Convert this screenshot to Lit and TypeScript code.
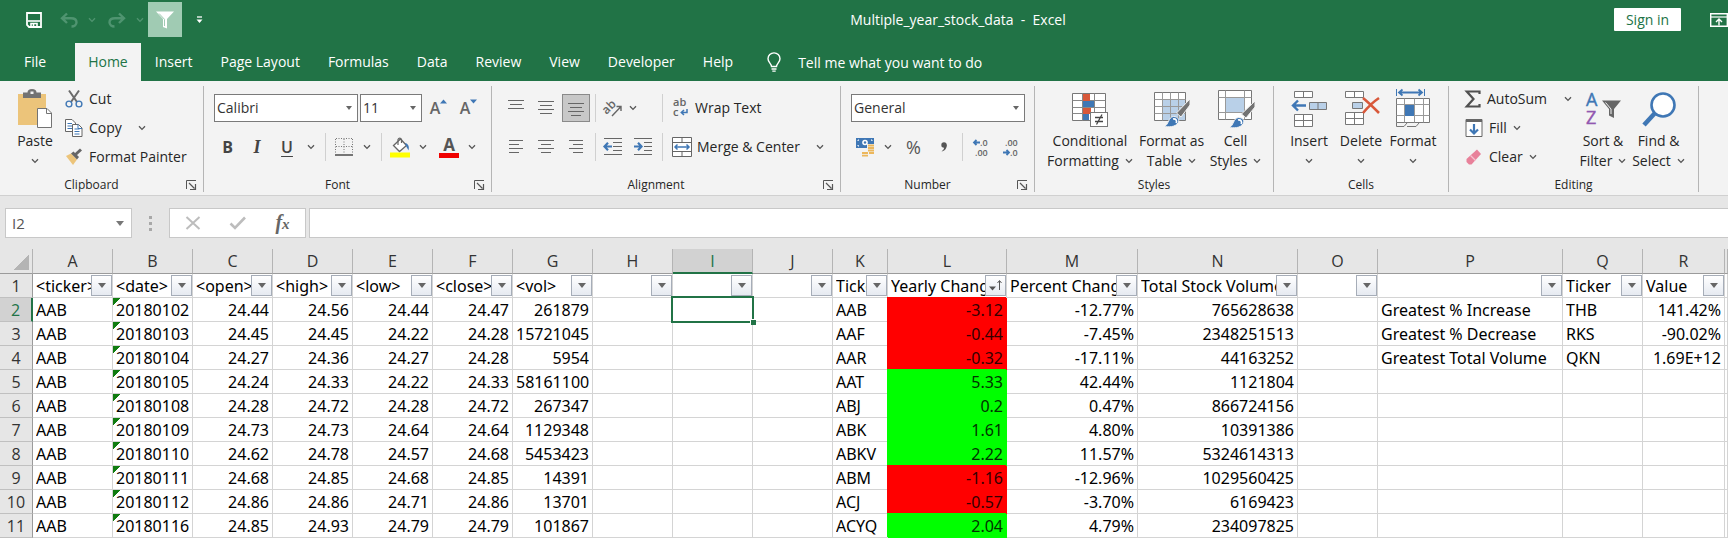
import { LitElement, html, css, svg, nothing } from 'lit';
import { customElement } from 'lit/decorators.js';
import { classMap } from 'lit/directives/class-map.js';

const chev = html`<svg class="chev" width="8" height="6" viewBox="0 0 8 6" aria-hidden="true"><path d="M1 1.2 4 4.4 7 1.2" fill="none" stroke="currentColor" stroke-width="1.3" /></svg>`;

const icon = (w: number, h: number, body: unknown) =>
  html`<svg class="icon" width=${w} height=${h} viewBox="0 0 ${w} ${h}" fill="none" aria-hidden="true">${body}</svg>`;

const lines = (rows: [number, number][], top = 1) =>
  rows.map(([a, b], i) => svg`<path d="M${a} ${top + i * 4 + 0.5}H${b}" stroke="#666" />`);

const ic = {
  save: icon(16, 16, svg`<path d="M1 1H15V15H3L1 13Z" stroke="#fff" stroke-width="1.8"/><path d="M2 9H14" stroke="#fff" stroke-width="1.6"/><path d="M5 15V11.500H11V15" stroke="#fff" stroke-width="1.6"/><path d="M7.500 12V15" stroke="#fff" stroke-width="1.6"/>`),
  undo: icon(18, 16, svg`<path d="M7 1.5 2 6.2 7 11M2.5 6.2H11C14.500 6.200 16.500 8 16.500 10.300S14.500 14.500 11.500 14.500" stroke="#4f9470" stroke-width="2.4"/>`),
  redo: icon(18, 16, svg`<path d="M11 1.500 16 6.200 11 11M15.500 6.200H7C3.500 6.200 1.500 8 1.500 10.300S3.500 14.500 6.500 14.500" stroke="#4f9470" stroke-width="2.400"/>`),
  funnel: icon(20, 18, svg`<path d="M1 .5H19L12 8V17.500L8 16V8Z" fill="#fff"/><path d="M4 2.500 9.500 8.300V15" stroke="#a0cbb3" stroke-width="1"/>`),
  more: icon(7, 8, svg`<path d="M1 1H6" stroke="#fff" stroke-width="1.300"/><path d="M.5 3.500H6.500L3.500 7Z" fill="#fff"/>`),
  display: icon(18, 14, svg`<path d="M.7.700H17.300V13.300H.7Z" stroke="#fff" stroke-width="1.400"/><path d="M1 4H17" stroke="#fff" stroke-width="1.200"/><path d="M9 12.500V6.500M6 9 9 6 12 9" stroke="#fff" stroke-width="1.400"/>`),
  bulb: icon(16, 20, svg`<path d="M5.500 14.500C5.500 11.500 2 10.500 2 6.700A6 5.800 0 0 1 14 6.700C14 10.500 10.500 11.500 10.500 14.500Z" stroke="#fff" stroke-width="1.400"/><path d="M5.500 17H10.500M6.300 19.200H9.700" stroke="#fff" stroke-width="1.300"/>`),
  paste: icon(36, 40, svg`<rect x="1" y="5" width="28" height="31" fill="#ecc47a"/><path d="M6 3.500H10.500A4.500 3.500 0 0 1 19.500 3.500H24V9H6Z" fill="#737373"/><rect x="13.500" y="2.500" width="3" height="2.500" fill="#f3f3f3"/><path d="M20.500 19.500H30L34.500 24V38.500H20.500Z" fill="#fff" stroke="#737373"/><path d="M29.500 19.500V24.500H34.500" stroke="#737373"/>`),
  cut: icon(18, 18, svg`<path d="M4 .5 12 12M14 .5 6 12" stroke="#6a6a6a" stroke-width="2"/><circle cx="4" cy="14" r="2.900" stroke="#3f77b5" stroke-width="1.400"/><circle cx="14" cy="14" r="2.900" stroke="#3f77b5" stroke-width="1.400"/>`),
  copy: icon(18, 18, svg`<path d="M.5.500H7L10.500 4V12.500H.5Z" fill="#fff" stroke="#666"/><path d="M2.500 4.500H7M2.500 7H7M2.500 9.500H7" stroke="#3f77b5"/><path d="M7.500 5.500H13.500L17 9V17.500H7.500Z" fill="#fff" stroke="#666"/><path d="M9.500 10H14.500M9.500 12.500H14.500M9.500 15H14.500M13 5.500V9.500H17" stroke="#3f77b5"/>`),
  painter: icon(18, 18, svg`<path d="M1 8 6 5.500 12 11.500 8 17Z" fill="#ecc47a"/><path d="M6 5.500 8.500 3.500 14 9 12 11.500Z" fill="#666"/><path d="M10.500 6.500 16 1.500" stroke="#666" stroke-width="3"/>`),
  grow: icon(8, 5, svg`<path d="M0 4.500 3.500.500 7 4.500Z" fill="#3f77b5"/>`),
  shrink: icon(8, 5, svg`<path d="M0 .5 3.500 4.500 7 .5Z" fill="#3f77b5"/>`),
  borders: icon(18, 18, svg`<path d="M1 .5H17M.5 1V16M17.500 1V16M1 8.500H17M9 1V16" stroke="#777" stroke-dasharray="1 1.500"/><path d="M0 17H18" stroke="#555" stroke-width="1.600"/>`),
  bucket: icon(20, 22, svg`<path d="M3.500 9.500 10.500 3 16.500 9.500 9.500 15.500Z" fill="#fff" stroke="#666" stroke-width="1.300"/><path d="M8 9V3.500A2 2.500 0 0 1 11.500 3.500V7" stroke="#666" stroke-width="1.200"/><path d="M15 7C18 7.500 19.500 10 18.500 14.500L16 10Z" fill="#3f77b5"/><rect y="16.500" width="20" height="5" fill="#ff0"/>`),
  alignTop: icon(18, 16, lines([[1, 17], [3, 15], [1, 17]], 0)),
  alignMid: icon(18, 16, lines([[1, 17], [3, 15], [1, 17], [3, 15]], 1)),
  alignBot: icon(18, 16, lines([[1, 17], [3, 15], [1, 17], [4, 14]], 3)),
  left: icon(16, 16, lines([[1, 15], [1, 11], [1, 15], [1, 11]], 1)),
  center: icon(16, 16, lines([[0, 16], [3, 13], [0, 16], [3, 13]], 1)),
  right: icon(16, 16, lines([[1, 15], [5, 15], [1, 15], [5, 15]], 1)),
  orient: icon(20, 18, svg`<text x="1" y="12" transform="rotate(-45 7 11)" font-family="Open Sans" font-size="12" font-weight="600" fill="#666">ab</text><path d="M9 17 18 7.500M13.500 7.500H18V12" stroke="#666" stroke-width="1.400"/>`),
  outdent: icon(20, 18, svg`<path d="M1 .5H19M10 4.500H19M10 8.500H19M10 12.500H19M1 16.500H19" stroke="#666"/><path d="M9 8.500H2M5 4.800 1.500 8.500 5 12.200" stroke="#3f77b5" stroke-width="2.200"/>`),
  indent: icon(20, 18, svg`<path d="M1 .5H19M11 4.500H19M11 8.500H19M11 12.500H19M1 16.500H19" stroke="#666"/><path d="M1 8.500H8M5 4.800 8.500 8.500 5 12.200" stroke="#3f77b5" stroke-width="2.200"/>`),
  wrap: icon(18, 20, svg`<text x="1" y="8" font-family="Open Sans" font-size="11" font-weight="600" fill="#666">ab</text><text x="1" y="18" font-family="Open Sans" font-size="11" font-weight="600" fill="#666">c</text><path d="M15 11V14.500H9.500M12 12 9.300 14.500 12 17" stroke="#3f77b5" stroke-width="1.500"/>`),
  merge: icon(20, 20, svg`<path d="M.5.500H19.500V19.500H.5Z" fill="#fff" stroke="#666"/><path d="M.5 5.500H19.500M.5 14.500H19.500M10 .5V5.500M10 14.500V19.500" stroke="#666"/><path d="M3 10H17M5.500 7.500 3 10 5.500 12.500M14.500 7.500 17 10 14.500 12.500" stroke="#3f77b5" stroke-width="1.500"/>`),
  money: icon(20, 20, svg`<rect x="1" y="1" width="18" height="10" fill="#3f77b5"/><path d="M3 4V3H4M16 3H17V4M3 8V9H4" stroke="#fff"/><circle cx="10" cy="5.500" r="2.800" fill="#fff"/><circle cx="10" cy="5.500" r="1.200" fill="#3f77b5"/><path d="M12 7H20V20H6V14H12Z" fill="#f3f3f3"/><path d="M13 8.500H19M13 11H19M13 13.500H19M7 16H13M14 16H19M7 18.700H13" stroke="#ecb75c" stroke-width="1.800"/>`),
  comma: icon(8, 12, svg`<circle cx="4" cy="4" r="2.700" fill="#555"/><path d="M6.600 3.500C7 8 4.500 10 1.500 10.500 3.500 9 4.500 7.500 4 5Z" fill="#555"/>`),
  decInc: icon(18, 20, svg`<path d="M8 5.500H2M4.500 3 2 5.500 4.500 8" stroke="#3f77b5" stroke-width="1.800"/><text x="8" y="9" font-family="Open Sans" font-size="9" font-weight="600" fill="#666">.0</text><text x="3" y="19" font-family="Open Sans" font-size="9" font-weight="600" fill="#666">.00</text>`),
  decDec: icon(18, 20, svg`<text x="3" y="9" font-family="Open Sans" font-size="9" font-weight="600" fill="#666">.00</text><text x="8" y="19" font-family="Open Sans" font-size="9" font-weight="600" fill="#666">.0</text><path d="M1 15.500H7M4.500 13 7 15.500 4.500 18" stroke="#3f77b5" stroke-width="1.800"/>`),
  cond: icon(38, 38, svg`<path d="M1.500 3.500H34.500V30.500H1.500Z" fill="#fff" stroke="#777"/><path d="M1.500 10.500H34.500M1.500 17.500H34.500M1.500 23.500H34.500M11.500 3.500V30.500M23.500 3.500V30.500" stroke="#888"/><rect x="12" y="4" width="7" height="7" fill="#d8583a"/><rect x="12" y="11" width="11" height="6" fill="#3f77b5"/><rect x="12" y="18" width="8" height="6" fill="#d8583a"/><rect x="12" y="24" width="6" height="6" fill="#3f77b5"/><rect x="19.500" y="22.500" width="17" height="14" fill="#fff" stroke="#777"/><path d="M24 27.500H32M24 31.500H32M31 24.500 25.500 34.500" stroke="#444" stroke-width="1.300"/>`),
  table: icon(38, 38, svg`<path d="M1.500 2.500H32.500V30.500H1.500Z" fill="#fff" stroke="#777"/><rect x="9" y="10" width="23" height="20" fill="#b9d0e8"/><path d="M1.500 9.500H32.500M1.500 16.500H32.500M1.500 23.500H32.500M9.500 2.500V30.500M17.500 2.500V30.500M25.500 2.500V30.500" stroke="#999"/><path d="M37 9V15L28 27 23.500 23Z" fill="#737373" stroke="#f3f3f3"/><path d="M11 36.500C16 35 15 27 20.500 26.500 25 26.500 27 30 25 33 22 37.500 15 37 11 36.500Z" fill="#3f77b5" stroke="#f3f3f3"/><path d="M20 29C23 28.500 24.500 31 23 33" stroke="#fff" stroke-width="1.600"/>`),
  cellStyles: icon(38, 40, svg`<path d="M1.500 1.500H34.500V30.500H1.500Z" fill="#fff" stroke="#777"/><path d="M1.500 8.500H34.500M1.500 23.500H34.500M8.500 1.500V30.500M27.500 1.500V30.500" stroke="#999"/><rect x="9" y="9" width="18" height="14" fill="#b9d0e8"/><path d="M38 12V18L29 29 24.500 25Z" fill="#737373" stroke="#f3f3f3"/><path d="M12 38.500C17 37 16 29 21.500 28.500 26 28.500 28 32 26 35 23 39.500 16 39 12 38.500Z" fill="#3f77b5" stroke="#f3f3f3"/><path d="M21 31C24 30.500 25.500 33 24 35" stroke="#fff" stroke-width="1.600"/>`),
  insert: icon(38, 38, svg`<path d="M4.500 1.500H22.500V7.500H4.500ZM13.500 1.500V7.500M4.500 24.500H22.500V36.500H4.500ZM13.500 24.500V36.500M4.500 30.500H22.500" fill="#fff" stroke="#777"/><path d="M19.500 12.500H36.500V19.500H19.500ZM28 12.500V19.500" fill="#b9d0e8" stroke="#777"/><path d="M16 15.500H3M8 10.500 3 15.500 8 20.500" stroke="#3f77b5" stroke-width="2.400"/>`),
  del: icon(38, 38, svg`<path d="M3.500 1.500H21.500V7.500H3.500ZM12.500 1.500V7.500M3.500 22.500H21.500V34.500H3.500ZM12.500 22.500V34.500M3.500 28.500H21.500" fill="#fff" stroke="#777"/><path d="M10.500 12.500H20.500V18.500H10.500Z" fill="#b9d0e8" stroke="#777"/><path d="M21 8C26 12 31 17 37 23M37 8C31 12 26 17 21 23" stroke="#d8583a" stroke-width="2.600"/>`),
  format: icon(36, 40, svg`<path d="M1.500 0V7M29.500 0V7" stroke="#3f77b5"/><path d="M4 3.500H27M7.500.500 4 3.500 7.500 6.500M23.500.500 27 3.500 23.500 6.500" stroke="#3f77b5" stroke-width="1.800"/><path d="M1.500 9.500H34.500V33.500H1.500Z" fill="#fff" stroke="#777"/><path d="M1.500 15.500H34.500M1.500 26.500H34.500M9.500 9.500V33.500M19.500 9.500V33.500M28.500 9.500V33.500" stroke="#999"/><rect x="10" y="16" width="9" height="11" fill="#3f77b5"/><path d="M1.500 33.500V37.500H9L12 34M12 37.500H21L24 34" stroke="#777"/>`),
  sigma: icon(16, 18, svg`<path d="M14.500 4V1.500H1.800L8.500 9 1.800 16.500H14.500V14" stroke="#505050" stroke-width="2.200"/>`),
  fill: icon(18, 18, svg`<path d="M1 .5H17V17.500H1Z" fill="#fff" stroke="#666"/><rect x="1" y="0" width="16" height="3" fill="#666"/><path d="M9 5V14M5 10.500 9 14.500 13 10.500" stroke="#3f77b5" stroke-width="2.200"/>`),
  eraser: icon(18, 18, svg`<path d="M1.500 11 12 1.500 16 6 6.500 16.500H4L1.500 14Z" fill="#e8819a"/><path d="M5.500 7.500 10.500 12.500" stroke="#f6c3cf" stroke-width="1.200"/>`),
  sort: icon(36, 36, svg`<text x="1" y="15" font-family="Open Sans" font-size="18" fill="#3f77b5" stroke="#3f77b5" stroke-width=".4">A</text><text x="1" y="33" font-family="Open Sans" font-size="18" fill="#9257b0" stroke="#9257b0" stroke-width=".4">Z</text><path d="M17 9.500H36L29 18V27L24 24.500V18Z" fill="#666"/><path d="M20.500 11.500 26 18V23" stroke="#f3f3f3" stroke-width="1"/>`),
  find: icon(36, 36, svg`<circle cx="22" cy="14" r="11.500" fill="#fff" stroke="#3f77b5" stroke-width="2.600"/><path d="M14 22 3 34" stroke="#3f77b5" stroke-width="4.500"/>`),
  launch: icon(11, 10, svg`<path d="M.5 9V.5H10" stroke="#555"/><path d="M3 3 8.500 8.500M9.500 4V9.500H4" stroke="#555" stroke-width="1.200"/>`),
  cancel: icon(16, 14, svg`<path d="M1.500 1 14.500 13M14.500 1 1.500 13" stroke="#bdbdbd" stroke-width="2"/>`),
  check: icon(18, 14, svg`<path d="M1.500 7.500 6 12 16 1.500" stroke="#bdbdbd" stroke-width="2.600"/>`),
  sorted: icon(15, 14, svg`<path d="M1 7.500H8L4.500 11.500Z" fill="#555"/><path d="M11.500 11V2M9.500 4 11.500 1.500 13.500 4" stroke="#555"/>`),
};

const TABS = ['File', 'Home', 'Insert', 'Page Layout', 'Formulas', 'Data', 'Review', 'View', 'Developer', 'Help'];
const COLS = 'ABCDEFGHIJKLMNOPQR'.split('');
const HEADS = ['<ticker>', '<date>', '<open>', '<high>', '<low>', '<close>', '<vol>', '', '', '', 'Ticker', 'Yearly Change', 'Percent Change', 'Total Stock Volume', '', '', 'Ticker', 'Value'];
const LEFT = new Set(['A', 'B', 'K', 'P', 'Q']);

const DATA: string[][] = [
  ['20180102', '24.44', '24.56', '24.44', '24.47', '261879', 'AAB', '-3.12', '-12.77%', '765628638', 'Greatest % Increase', 'THB', '141.42%'],
  ['20180103', '24.45', '24.45', '24.22', '24.28', '15721045', 'AAF', '-0.44', '-7.45%', '2348251513', 'Greatest % Decrease', 'RKS', '-90.02%'],
  ['20180104', '24.27', '24.36', '24.27', '24.28', '5954', 'AAR', '-0.32', '-17.11%', '44163252', 'Greatest Total Volume', 'QKN', '1.69E+12'],
  ['20180105', '24.24', '24.33', '24.22', '24.33', '58161100', 'AAT', '5.33', '42.44%', '1121804'],
  ['20180108', '24.28', '24.72', '24.28', '24.72', '267347', 'ABJ', '0.2', '0.47%', '866724156'],
  ['20180109', '24.73', '24.73', '24.64', '24.64', '1129348', 'ABK', '1.61', '4.80%', '10391386'],
  ['20180110', '24.62', '24.78', '24.57', '24.68', '5453423', 'ABKV', '2.22', '11.57%', '5324614313'],
  ['20180111', '24.68', '24.85', '24.68', '24.85', '14391', 'ABM', '-1.16', '-12.96%', '1029560425'],
  ['20180112', '24.86', '24.86', '24.71', '24.86', '13701', 'ACJ', '-0.57', '-3.70%', '6169423'],
  ['20180116', '24.85', '24.93', '24.79', '24.79', '101867', 'ACYQ', '2.04', '4.79%', '234097825'],
];

const rowCells = (r: string[]) => [
  'AAB', ...r.slice(0, 6), '', '', '', ...r.slice(6, 10), '', r[10] ?? '', r[11] ?? '', r[12] ?? '',
];

@customElement('excel-titlebar')
class ExcelTitlebar extends LitElement {
  static styles = css`
    :host { display: block; background: #217346; color: #fff; font: 14px/20px "Open Sans", sans-serif; }
    button { font: inherit; color: inherit; border: 0; background: none; padding: 0; margin: 0; }
    svg { display: block; }
    .top { display: flex; height: 43px; }
    .qat { display: flex; align-items: center; box-sizing: border-box; width: 302px; height: 39px; padding-left: 18px; }
    .qat button { display: flex; align-items: center; justify-content: center; height: 35px; }
    .save, .hist { width: 32px; }
    .hist { margin-left: 3px; }
    .arrow { width: 13px; color: #4f9470; }
    .qat .filter { width: 34px; background: #a0cbb3; }
    .more { width: 34px; }
    .arrow + .filter { margin-left: 2px; }
    .title { flex: 1; text-align: center; white-space: pre; line-height: 40px; }
    .account { display: flex; align-items: center; gap: 29px; height: 39px; }
    .signin { box-sizing: border-box; width: 67px; height: 23px; background: #fff; color: #217346; border-radius: 1px; line-height: 22px; }
    .tabs { display: flex; height: 38px; }
    .tabs a { color: #fff; text-decoration: none; padding: 0 14px; line-height: 37px; white-space: nowrap; }
    .tabs a.file { padding: 0 29px 0 24px; }
    .tabs a.on { background: #f3f3f3; color: #217346; padding: 0 13px; }
    .tell { display: flex; align-items: center; gap: 16px; padding-left: 19px; line-height: 37px; }
  `;
  render() {
    return html`
      <div class="top">
        <div class="qat">
          <button class="save" aria-label="Save">${ic.save}</button>
          <button class="hist" aria-label="Undo">${ic.undo}</button><button class="arrow" aria-label="Undo list">${chev}</button>
          <button class="hist" aria-label="Redo">${ic.redo}</button><button class="arrow" aria-label="Redo list">${chev}</button>
          <button class="filter" aria-label="Filter">${ic.funnel}</button>
          <button class="more" aria-label="Customize toolbar">${ic.more}</button>
        </div>
        <div class="title">Multiple_year_stock_data  -  Excel</div>
        <div class="account">
          <button class="signin">Sign in</button>
          <button aria-label="Ribbon display options">${ic.display}</button>
        </div>
      </div>
      <nav class="tabs">
        ${TABS.map(t => html`<a href="#" class=${classMap({ file: t === 'File', on: t === 'Home' })}>${t}</a>`)}
        <button class="tell">${ic.bulb}<span>Tell me what you want to do</span></button>
      </nav>`;
  }
}

@customElement('excel-ribbon')
class ExcelRibbon extends LitElement {
  static styles = css`
    :host { display: flex; background: #f3f3f3; border-bottom: 1px solid #d0d0d0; padding: 5px 0 3px; color: #262626; font: 14px/20px "Open Sans", sans-serif; }
    button { font: inherit; color: inherit; border: 0; background: none; padding: 0; margin: 0; white-space: nowrap; }
    svg { display: block; flex: none; overflow: visible; }
    .chev { color: #555; }
    .group { display: flex; flex-direction: column; box-sizing: border-box; flex: none; border-right: 1px solid #b5b5b5; }
    .body { box-sizing: border-box; height: 92px; }
    .caption { display: grid; grid-template-columns: 1fr 20px; font-size: 12px; line-height: 14px; text-align: center; }
    .caption button { display: grid; place-items: center; padding-right: 4px; }
    .caption.plain { grid-template-columns: 1fr; }
    .clipboard { width: 204px; } .font { width: 288px; } .alignment { width: 349px; } .number { width: 194px; }
    .styles { width: 239px; } .cells { width: 175px; } .editing { width: 250px; }
    .row { display: flex; }
    .list { display: flex; flex-direction: column; align-items: flex-start; margin-top: -2px; }
    .item { display: flex; align-items: center; gap: 6px; height: 29px; }
    .item.far .chev { margin-left: 10px; }
    .big { display: flex; flex-direction: column; align-items: center; }
    .big .art { display: grid; place-items: center; height: 45px; }
    .big .two { display: flex; align-items: center; gap: 6px; height: 20px; }
    .clipboard .row { padding-left: 16px; }
    .clipboard .big { width: 38px; }
    .clipboard .list { padding-left: 11px; }
    .pad { padding: 8px 9px 0 10px; }
    .tools { display: grid; align-items: center; height: 28px; margin-top: 11px; }
    .tools > * { display: grid; place-items: center; height: 28px; }
    .tools.first { margin-top: 0; }
    .sep { justify-self: center; width: 1px; background: #d0d0d0; }
    .fonts { display: grid; grid-template-columns: 144px 62px 30px 26px; gap: 2px; }
    .fonts button { display: flex; align-items: center; justify-content: center; }
    .t-font { grid-template-columns: 27px 32px 28px 20px 8px 30px 16px 12px 26px 20px 32px 14px; }
    .t-align { grid-template-columns: 30px 30px 30px 8px 28px 32px 7px 1fr; }
    .alignment .pad { padding-left: 9px; }
    .t-num { grid-template-columns: 28px 18px 33px 27px 11px 26px 34px; }
    .tools .on { justify-self: center; box-sizing: border-box; width: 28px; background: #c8c8c8; border: 1px solid #8a8a8a; }
    .tools .startx { justify-items: start; padding-left: 2px; }
    .tools .text { display: flex; align-items: center; gap: 5px; padding-left: 6px; justify-self: start; }
    .text .chev { margin-left: 11px; }
    .b { font-weight: 700; font-size: 16px; color: #444; }
    .i { font: italic 700 18px "Liberation Serif", serif; color: #444; }
    .u { font-weight: 600; font-size: 16px; color: #444; text-decoration: underline; text-underline-offset: 3px; }
    .glyph { font-size: 16px; font-weight: 600; color: #666; }
    .glyph svg { align-self: flex-start; margin-top: 5px; }
    .pct { font-size: 18px; color: #555; }
    .color { display: flex; flex-direction: column; align-items: center; font-weight: 700; font-size: 17px; line-height: 17px; color: #555; }
    .color::after { content: ""; width: 20px; height: 5px; background: #f00000; }
    .combo { position: relative; display: block; height: 28px; }
    .combo::after { content: ""; position: absolute; right: 6px; top: 12px; border: 3px solid transparent; border-top: 4px solid #666; border-bottom: 0; pointer-events: none; }
    select { appearance: none; box-sizing: border-box; width: 100%; height: 28px; margin: 0; padding: 0 2px; border: 1px solid #7a7a7a; border-radius: 0; background: #fff; color: #333; font: inherit; }
    .styles .row, .cells .row { padding-left: 9px; }
    .w1 { width: 92px; } .w2 { width: 71px; } .w3 { width: 57px; } .w4 { width: 52px; }
    .editing .list { box-sizing: border-box; width: 117px; padding-left: 6px; }
    .editing .row { padding-left: 10px; }
    .editing .w5 { width: 54px; }
    .editing .item.auto .chev { margin-left: 11px; }
  `;
  private caption(text: string, launcher = true) {
    return html`<div class="caption ${launcher ? '' : 'plain'}"><span>${text}</span>${launcher ? html`<button aria-label="${text} settings">${ic.launch}</button>` : nothing}</div>`;
  }
  private combo(label: string, value: string) {
    return html`<label class="combo"><select aria-label=${label}><option>${value}</option></select></label>`;
  }
  private big(w: string, art: unknown, a: string, b: string) {
    return html`<button class="big ${w}"><span class="art">${art}</span><span>${a}</span><span class="two">${b || nothing}${chev}</span></button>`;
  }
  render() {
    const c = (label: string) => html`<button aria-label=${label}>${chev}</button>`;
    const s = html`<span class="sep"></span>`;
    return html`
      <section class="group clipboard">
        <div class="body row">
          ${this.big('', ic.paste, 'Paste', '')}
          <div class="list">
            <button class="item">${ic.cut}Cut</button>
            <button class="item far">${ic.copy}Copy${chev}</button>
            <button class="item">${ic.painter}Format Painter</button>
          </div>
        </div>
        ${this.caption('Clipboard')}
      </section>
      <section class="group font">
        <div class="body pad">
          <div class="fonts">
            ${this.combo('Font', 'Calibri')}${this.combo('Font size', '11')}
            <button class="glyph" aria-label="Increase font size">A${ic.grow}</button>
            <button class="glyph" aria-label="Decrease font size">A${ic.shrink}</button>
          </div>
          <div class="tools t-font">
            <button class="b">B</button><button class="i">I</button><button class="u">U</button>${c('Underline style')}${s}
            <button aria-label="Borders">${ic.borders}</button>${c('Border style')}${s}
            <button aria-label="Fill color">${ic.bucket}</button>${c('Fill colors')}
            <button aria-label="Font color"><span class="color">A</span></button>${c('Font colors')}
          </div>
        </div>
        ${this.caption('Font')}
      </section>
      <section class="group alignment">
        <div class="body pad">
          <div class="tools first t-align">
            <button aria-label="Top align">${ic.alignTop}</button><button aria-label="Middle align">${ic.alignMid}</button><button class="on" aria-label="Bottom align">${ic.alignBot}</button>${s}
            <button aria-label="Orientation">${ic.orient}</button><button class="startx" aria-label="Orientation list">${chev}</button>${s}
            <button class="text">${ic.wrap}Wrap Text</button>
          </div>
          <div class="tools t-align">
            <button aria-label="Align left">${ic.left}</button><button aria-label="Center">${ic.center}</button><button aria-label="Align right">${ic.right}</button>${s}
            <button aria-label="Decrease indent">${ic.outdent}</button><button aria-label="Increase indent">${ic.indent}</button>${s}
            <button class="text">${ic.merge}Merge &amp; Center${chev}</button>
          </div>
        </div>
        ${this.caption('Alignment')}
      </section>
      <section class="group number">
        <div class="body pad">
          ${this.combo('Number format', 'General')}
          <div class="tools t-num">
            <button aria-label="Accounting format">${ic.money}</button>${c('Currencies')}
            <button class="pct">%</button><button aria-label="Comma style">${ic.comma}</button>${s}
            <button aria-label="Increase decimal">${ic.decInc}</button><button aria-label="Decrease decimal">${ic.decDec}</button>
          </div>
        </div>
        ${this.caption('Number')}
      </section>
      <section class="group styles">
        <div class="body row">
          ${this.big('w1', ic.cond, 'Conditional', 'Formatting')}${this.big('w2', ic.table, 'Format as', 'Table')}${this.big('w3', ic.cellStyles, 'Cell', 'Styles')}
        </div>
        ${this.caption('Styles', false)}
      </section>
      <section class="group cells">
        <div class="body row">
          ${this.big('w4', ic.insert, 'Insert', '')}${this.big('w4', ic.del, 'Delete', '')}${this.big('w4', ic.format, 'Format', '')}
        </div>
        ${this.caption('Cells', false)}
      </section>
      <section class="group editing">
        <div class="body row">
          <div class="list">
            <button class="item auto">${ic.sigma}AutoSum${chev}</button>
            <button class="item">${ic.fill}Fill${chev}</button>
            <button class="item">${ic.eraser}Clear${chev}</button>
          </div>
          ${this.big('w5', ic.sort, 'Sort &', 'Filter')}${this.big('w3', ic.find, 'Find &', 'Select')}
        </div>
        ${this.caption('Editing', false)}
      </section>`;
  }
}

@customElement('excel-formula-bar')
class ExcelFormulaBar extends LitElement {
  static styles = css`
    :host { display: flex; align-items: stretch; height: 30px; padding: 12px 0 11px 5px; background: #e6e6e6; font: 14px/20px "Open Sans", sans-serif; }
    input { box-sizing: border-box; border: 1px solid #c8c8c8; background: #fff; border-radius: 0; padding: 0 6px; margin: 0; color: #555; font: inherit; font-size: 15px; outline: none; min-width: 0; }
    svg { display: block; }
    button { border: 0; background: none; padding: 0; margin: 0; display: grid; place-items: center; }
    .name { position: relative; display: flex; width: 127px; }
    .name input { width: 100%; }
    .name::after { content: ""; position: absolute; right: 8px; top: 13px; border: 4px solid transparent; border-top: 5px solid #777; border-bottom: 0; }
    .dots { display: flex; flex-direction: column; align-items: center; justify-content: center; gap: 3px; width: 37px; }
    .dots i { width: 3px; height: 3px; background: #a8a8a8; }
    .acts { display: grid; grid-template-columns: 45px 45px 45px; box-sizing: border-box; width: 137px; background: #fff; border: 1px solid #c8c8c8; }
    .fx { font: italic 700 20px "Liberation Serif", serif; color: #666; }
    .fx small { font-size: 15px; }
    .formula { flex: 1; margin-left: 3px; border-right: 0; }
    .fx span { line-height: 24px; }
  `;
  render() {
    return html`
      <label class="name"><input aria-label="Name box" value="I2" /></label>
      <span class="dots"><i></i><i></i><i></i></span>
      <div class="acts">
        <button aria-label="Cancel">${ic.cancel}</button><button aria-label="Enter">${ic.check}</button>
        <button class="fx" aria-label="Insert function"><span>f<small>x</small></span></button>
      </div>
      <input class="formula" aria-label="Formula" />`;
  }
}

@customElement('excel-grid')
class ExcelGrid extends LitElement {
  static styles = css`
    :host { display: block; overflow: hidden; background: #fff; font: 16px/20px "Noto Sans", sans-serif; color: #000; }
    table { table-layout: fixed; width: 100%; border-collapse: separate; border-spacing: 0; }
    .rowhead { width: 33px; } .c { width: 80px; } .cK { width: 55px; } .cL { width: 119px; } .cM { width: 131px; }
    .cN { width: 160px; } .cP { width: 185px; } .cR { width: 82px; }
    th { font: 16px/20px "Open Sans", sans-serif; background: #e6e6e6; color: #333; padding: 0; border: 0 solid #c0c0c0; border-width: 0 1px 1px 0; box-sizing: border-box; height: 24px; overflow: hidden; }
    thead th { height: 25px; border-bottom-color: #9b9b9b; border-right-color: #b4b4b4; }
    tbody th { border-right-color: #9b9b9b; }
    thead th.sel { background: #d2d2d2; color: #217346; border-bottom: 2px solid #217346; }
    tbody th.sel { background: #d2d2d2; color: #217346; border-right: 2px solid #217346; }
    .corner { background: linear-gradient(135deg, transparent 50%, #b4b4b4 50%) no-repeat 14px 6px / 15px 15px #e6e6e6; }
    td { position: relative; box-sizing: border-box; height: 24px; padding: 0 3px; border: 0 solid #d4d4d4; border-width: 0 1px 1px 0; white-space: nowrap; text-align: right; }
    td > .v { display: block; overflow: hidden; height: 20px; }
    td.l { text-align: left; }
    td.date { background: linear-gradient(135deg, #107c10 5px, transparent 5px) no-repeat 0 0 / 8px 8px; }
    td.red { background: #f00; border-color: #f00; box-shadow: -1px -1px 0 #f00; color: #300; }
    td.green { background: #0f0; border-color: #0f0; box-shadow: -1px -1px 0 #0f0; color: #030; }
    .flt { position: absolute; right: 0; top: 1px; display: grid; place-items: center; box-sizing: border-box; width: 21px; height: 21px; padding: 0; border: 1px solid #a6adb8; background: linear-gradient(#fff, #e6eaf1); }
    .tri { border: 4px solid transparent; border-top: 5px solid #666; border-bottom: 0; }
    .cursor { position: absolute; inset: -2px; border: 2px solid #217346; z-index: 1; }
    .cursor::after { content: ""; position: absolute; right: -4px; bottom: -4px; width: 5px; height: 5px; background: #217346; border: solid #fff; border-width: 1px 0 0 1px; }
  `;
  private body(r: string[], n: number) {
    return html`<tr><th class=${n === 2 ? 'sel' : ''}>${n}</th>
      ${rowCells(r).map((v, i) => {
        const col = COLS[i];
        return html`<td class=${classMap({ l: LEFT.has(col), date: col === 'B', red: col === 'L' && v.startsWith('-'), green: col === 'L' && !v.startsWith('-') })}>${v ? html`<span class="v">${v}</span>` : nothing}${n === 2 && col === 'I' ? html`<span class="cursor"></span>` : nothing}</td>`;
      })}<td></td></tr>`;
  }
  render() {
    return html`<table>
      <colgroup><col class="rowhead" />${COLS.map(c => html`<col class="c c${c}" />`)}<col /></colgroup>
      <thead><tr><th class="corner"></th>${COLS.map(c => html`<th class=${c === 'I' ? 'sel' : ''}>${c}</th>`)}<th></th></tr></thead>
      <tbody>
        <tr><th>1</th>${HEADS.map((h, i) => html`<td class="l"><span class="v">${h}</span><button class="flt" aria-label="Filter column ${COLS[i]}">${COLS[i] === 'L' ? ic.sorted : html`<i class="tri"></i>`}</button></td>`)}<td></td></tr>
        ${DATA.map((r, i) => this.body(r, i + 2))}
      </tbody>
    </table>`;
  }
}

@customElement('app-root')
class AppRoot extends LitElement {
  static styles = css`:host { display: block; background: #e6e6e6; overflow: hidden; }`;
  render() {
    return html`<excel-titlebar></excel-titlebar><excel-ribbon></excel-ribbon><excel-formula-bar></excel-formula-bar><excel-grid></excel-grid>`;
  }
}
